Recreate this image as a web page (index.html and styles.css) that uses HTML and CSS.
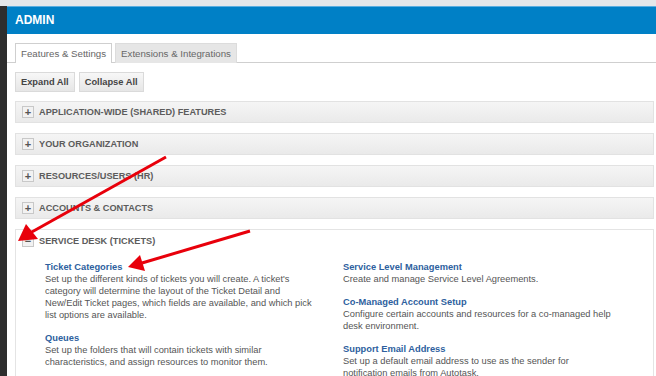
FILE: index.html
```html
<!DOCTYPE html>
<html lang="en">
<head>
  <meta charset="UTF-8" />
  <title>Admin</title>
  <link rel="stylesheet" href="styles.css">
</head>
<body>
  <div class="top-strip"></div>
  <div class="shell">
    <div class="admin-bar">ADMIN</div>

    <div class="tabs">
      <div class="tab active">Features &amp; Settings</div>
      <div class="tab">Extensions &amp; Integrations</div>
    </div>

    <div class="toolbar">
      <button>Expand All</button>
      <button>Collapse All</button>
    </div>

    <!-- Settings categories -->
    <div class="section">
      <div class="section-head"><span class="toggle">+</span>Application-Wide (Shared) Features</div>
    </div>
    <div class="section">
      <div class="section-head"><span class="toggle">+</span>Your Organization</div>
    </div>
    <div class="section">
      <div class="section-head"><span class="toggle">+</span>Resources/Users (HR)</div>
    </div>
    <div class="section">
      <div class="section-head"><span class="toggle">+</span>Accounts &amp; Contacts</div>
    </div>

    <div class="section open">
      <div class="section-head"><span class="toggle">&minus;</span>Service Desk (Tickets)</div>
      <div class="section-body">
        <div class="column">
          <div class="item">
            <a href="#">Ticket Categories</a>
            <p>Set up the different kinds of tickets you will create. A ticket's category will determine the layout of the Ticket Detail and New/Edit Ticket pages, which fields are available, and which pick list options are available.</p>
          </div>
          <div class="item">
            <a href="#">Queues</a>
            <p>Set up the folders that will contain tickets with similar characteristics, and assign resources to monitor them.</p>
          </div>
        </div>
        <div class="column">
          <div class="item">
            <a href="#">Service Level Management</a>
            <p>Create and manage Service Level Agreements.</p>
          </div>
          <div class="item">
            <a href="#">Co-Managed Account Setup</a>
            <p>Configure certain accounts and resources for a co-managed help desk environment.</p>
          </div>
          <div class="item">
            <a href="#">Support Email Address</a>
            <p>Set up a default email address to use as the sender for notification emails from Autotask.</p>
          </div>
        </div>
      </div>
    </div>
  </div>

  <!-- annotation arrows -->
  <svg class="arrows" width="656" height="376" viewBox="0 0 656 376">
    <line x1="166" y1="157" x2="30" y2="233" />
    <polygon points="18,241 26,224 38,239" />
    <line x1="250" y1="231" x2="142" y2="263" />
    <polygon points="128,267 140,255 145,271" />
  </svg>
</body>
</html>
```

FILE: styles.css
```css
body {
  margin: 0;
  background: #2e2e2e;
  font-family: 'Liberation Sans', Arial, sans-serif;
  height: 376px;
  overflow: hidden;
  position: relative;
}

.top-strip {
  height: 6px;
  background: #e3e7ea;
}

.shell {
  margin-left: 7px;
  background: #fff;
  height: 370px;
}

.admin-bar {
  background: #0080c6;
  border-top: 1px solid #5aaee0;
  height: 27px;
  line-height: 27px;
  padding-left: 8px;
  color: #fff;
  font-weight: bold;
  font-size: 12px;
}

.tabs {
  display: flex;
  gap: 3px;
  margin-top: 9px;
  padding-left: 8px;
  border-bottom: 1px solid #cfcfcf;
  height: 19px;
}

.tab {
  height: 20px;
  line-height: 19px;
  padding: 0 5px;
  font-size: 9.7px;
  color: #666;
  background: #e6e6e6;
  border: 1px solid #dcdcdc;
  border-bottom: none;
  box-sizing: border-box;
}

.tab.active {
  background: #fff;
  border-color: #cfcfcf;
}

.toolbar {
  display: flex;
  gap: 4px;
  padding: 9px 8px 0;
}

button {
  font-family: inherit;
  font-size: 9.3px;
  font-weight: bold;
  color: #444;
  background: linear-gradient(#f7f7f7, #e6e6e6);
  border: 1px solid #dadada;
  height: 20px;
  padding: 0 5px;
  margin: 0;
}

.section {
  margin: 9px 2px 0 8px;
}

.section + .section {
  margin-top: 10px;
}

.section-head {
  height: 22px;
  box-sizing: border-box;
  display: flex;
  align-items: center;
  padding-left: 6px;
  background: linear-gradient(#f5f5f5, #eaeaea);
  border: 1px solid #e2e2e2;
  font-size: 9.2px;
  font-weight: bold;
  text-transform: uppercase;
  color: #5c5c5c;
}

.toggle {
  width: 10px;
  height: 10px;
  border: 1px solid #c8c8c8;
  background: #f2f2f2;
  margin-right: 5px;
  font-size: 11px;
  line-height: 10px;
  text-align: center;
  color: #555;
}

.section.open {
  border: 1px solid #e4e4e4;
  height: 160px;
}

.section.open .section-head {
  background: #fff;
  border: none;
}

.section-body {
  display: grid;
  grid-template-columns: 268px 268px;
  column-gap: 30px;
  padding: 9px 0 0 29px;
}

.item {
  margin-bottom: 11px;
}

.item a {
  display: block;
  font-size: 9.3px;
  font-weight: bold;
  color: #2e5f9e;
  text-decoration: none;
  line-height: 12px;
}

.item p {
  margin: 0;
  font-size: 9.3px;
  line-height: 12px;
  color: #555;
}

.arrows {
  position: absolute;
  left: 0;
  top: 0;
}

.arrows line {
  stroke: #e8000b;
  stroke-width: 3;
}

.arrows polygon {
  fill: #e8000b;
}
```
